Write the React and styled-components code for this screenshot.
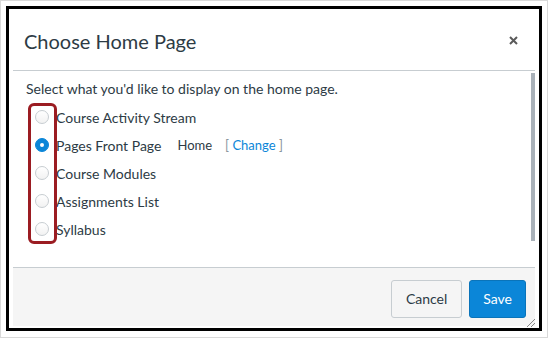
import styled, { createGlobalStyle } from "styled-components";

const GlobalStyle = createGlobalStyle`
  body {
    margin: 0;
    background: #fff;
    font-family: Lato, "Open Sans", sans-serif;
    color: #2d3b45;
  }
`;

const Frame = styled.div`
  box-sizing: border-box;
  width: 548px;
  height: 338px;
  border: 1px solid #d9d9d9;
  padding: 5px 5px 6px;
`;

const Outline = styled.div`
  box-sizing: border-box;
  height: 100%;
  border: 3px solid #000;
`;

const Dialog = styled.div`
  position: relative;
  display: flex;
  flex-direction: column;
  height: 100%;
  padding: 0 4px 2px;
  box-sizing: border-box;
`;

const Header = styled.div`
  height: 62px;
  box-sizing: border-box;
  display: flex;
  align-items: center;
  justify-content: space-between;
  padding: 0 17px 0 11px;
  border-bottom: 1px solid #c7cdd1;
  flex-shrink: 0;
`;

const Title = styled.h1`
  margin: 0;
  font-size: 20px;
  font-weight: 400;
  color: #2d3b45;
  padding-top: 2px;
`;

const Close = styled.svg`
  display: block;
  margin-top: 2px;
`;

const Body = styled.div`
  position: relative;
  flex: 1;
  padding: 8px 0 0 13px;
`;

const Intro = styled.p`
  margin: 0;
  font-size: 14px;
  line-height: 20px;
`;

const List = styled.div`
  position: relative;
  margin-top: 4px;
`;

const Row = styled.label`
  display: flex;
  align-items: center;
  height: 28px;
  font-size: 14px;
`;

const Radio = styled.span`
  box-sizing: border-box;
  width: 14px;
  height: 14px;
  margin: 0 7px 0 9px;
  border-radius: 50%;
  display: flex;
  align-items: center;
  justify-content: center;
  border: 1px solid ${({ checked }) => (checked ? "#0b86d8" : "#c7cdd1")};
  background: ${({ checked }) =>
    checked ? "#0b86d8" : "linear-gradient(#fff, #f2f2f2)"};

  &::after {
    content: "";
    width: 4px;
    height: 4px;
    border-radius: 50%;
    background: #fff;
    display: ${({ checked }) => (checked ? "block" : "none")};
  }
`;

const Meta = styled.span`
  font-size: 13px;
  margin-left: ${({ gap }) => gap}px;
  color: ${({ muted }) => (muted ? "#8b969e" : "#2d3b45")};
`;

const Link = styled.a`
  color: #0b86d8;
  text-decoration: none;
`;

const Highlight = styled.div`
  position: absolute;
  left: 2px;
  top: 0;
  width: 29px;
  height: 141px;
  box-sizing: border-box;
  border: 3px solid #9b1c22;
  border-radius: 6px;
  pointer-events: none;
`;

const Scrollbar = styled.div`
  position: absolute;
  right: 0;
  top: 2px;
  width: 4px;
  height: 168px;
  background: #a9b1b9;
`;

const Footer = styled.div`
  height: 59px;
  box-sizing: border-box;
  display: flex;
  justify-content: flex-end;
  align-items: center;
  gap: 7px;
  padding: 3px 9px 0 0;
  background: #f5f5f5;
  border-top: 1px solid #c7cdd1;
  flex-shrink: 0;
`;

const Button = styled.button`
  height: 38px;
  padding: 0 ${({ primary }) => (primary ? 13 : 14)}px;
  border-radius: 3px;
  font-family: Lato, sans-serif;
  font-size: 14px;
  border: 1px solid ${({ primary }) => (primary ? "#0a74ba" : "#c7cdd1")};
  background: ${({ primary }) => (primary ? "#0b86d8" : "#f5f5f5")};
  color: ${({ primary }) => (primary ? "#fff" : "#2d3b45")};
`;

const Grip = styled.svg`
  position: absolute;
  right: 3px;
  bottom: 0;
`;

const options = [
  "Course Activity Stream",
  "Pages Front Page",
  "Course Modules",
  "Assignments List",
  "Syllabus",
];

export default function App() {
  return (
    <>
      <GlobalStyle />
      <Frame>
        <Outline>
          <Dialog>
            <Header>
              <Title>Choose Home Page</Title>
              <Close width="9" height="9" viewBox="0 0 9 9">
                <path d="M1 1L8 8M8 1L1 8" stroke="#5b5b5b" strokeWidth="2" />
              </Close>
            </Header>
            <Body>
              <Intro>Select what you'd like to display on the home page.</Intro>
              <List>
                {options.map((o) => (
                  <Row key={o}>
                    <Radio checked={o === "Pages Front Page"} />
                    {o}
                    {o === "Pages Front Page" && (
                      <>
                        <Meta gap={16}>Home</Meta>
                        <Meta gap={13} muted>
                          [ <Link>Change</Link> ]
                        </Meta>
                      </>
                    )}
                  </Row>
                ))}
                <Highlight />
              </List>
              <Scrollbar />
            </Body>
            <Footer>
              <Button>Cancel</Button>
              <Button primary>Save</Button>
            </Footer>
            <Grip width="10" height="10" viewBox="0 0 10 10">
              <path d="M9 1L1 9M9 5L5 9" stroke="#888" strokeWidth="1" />
            </Grip>
          </Dialog>
        </Outline>
      </Frame>
    </>
  );
}
